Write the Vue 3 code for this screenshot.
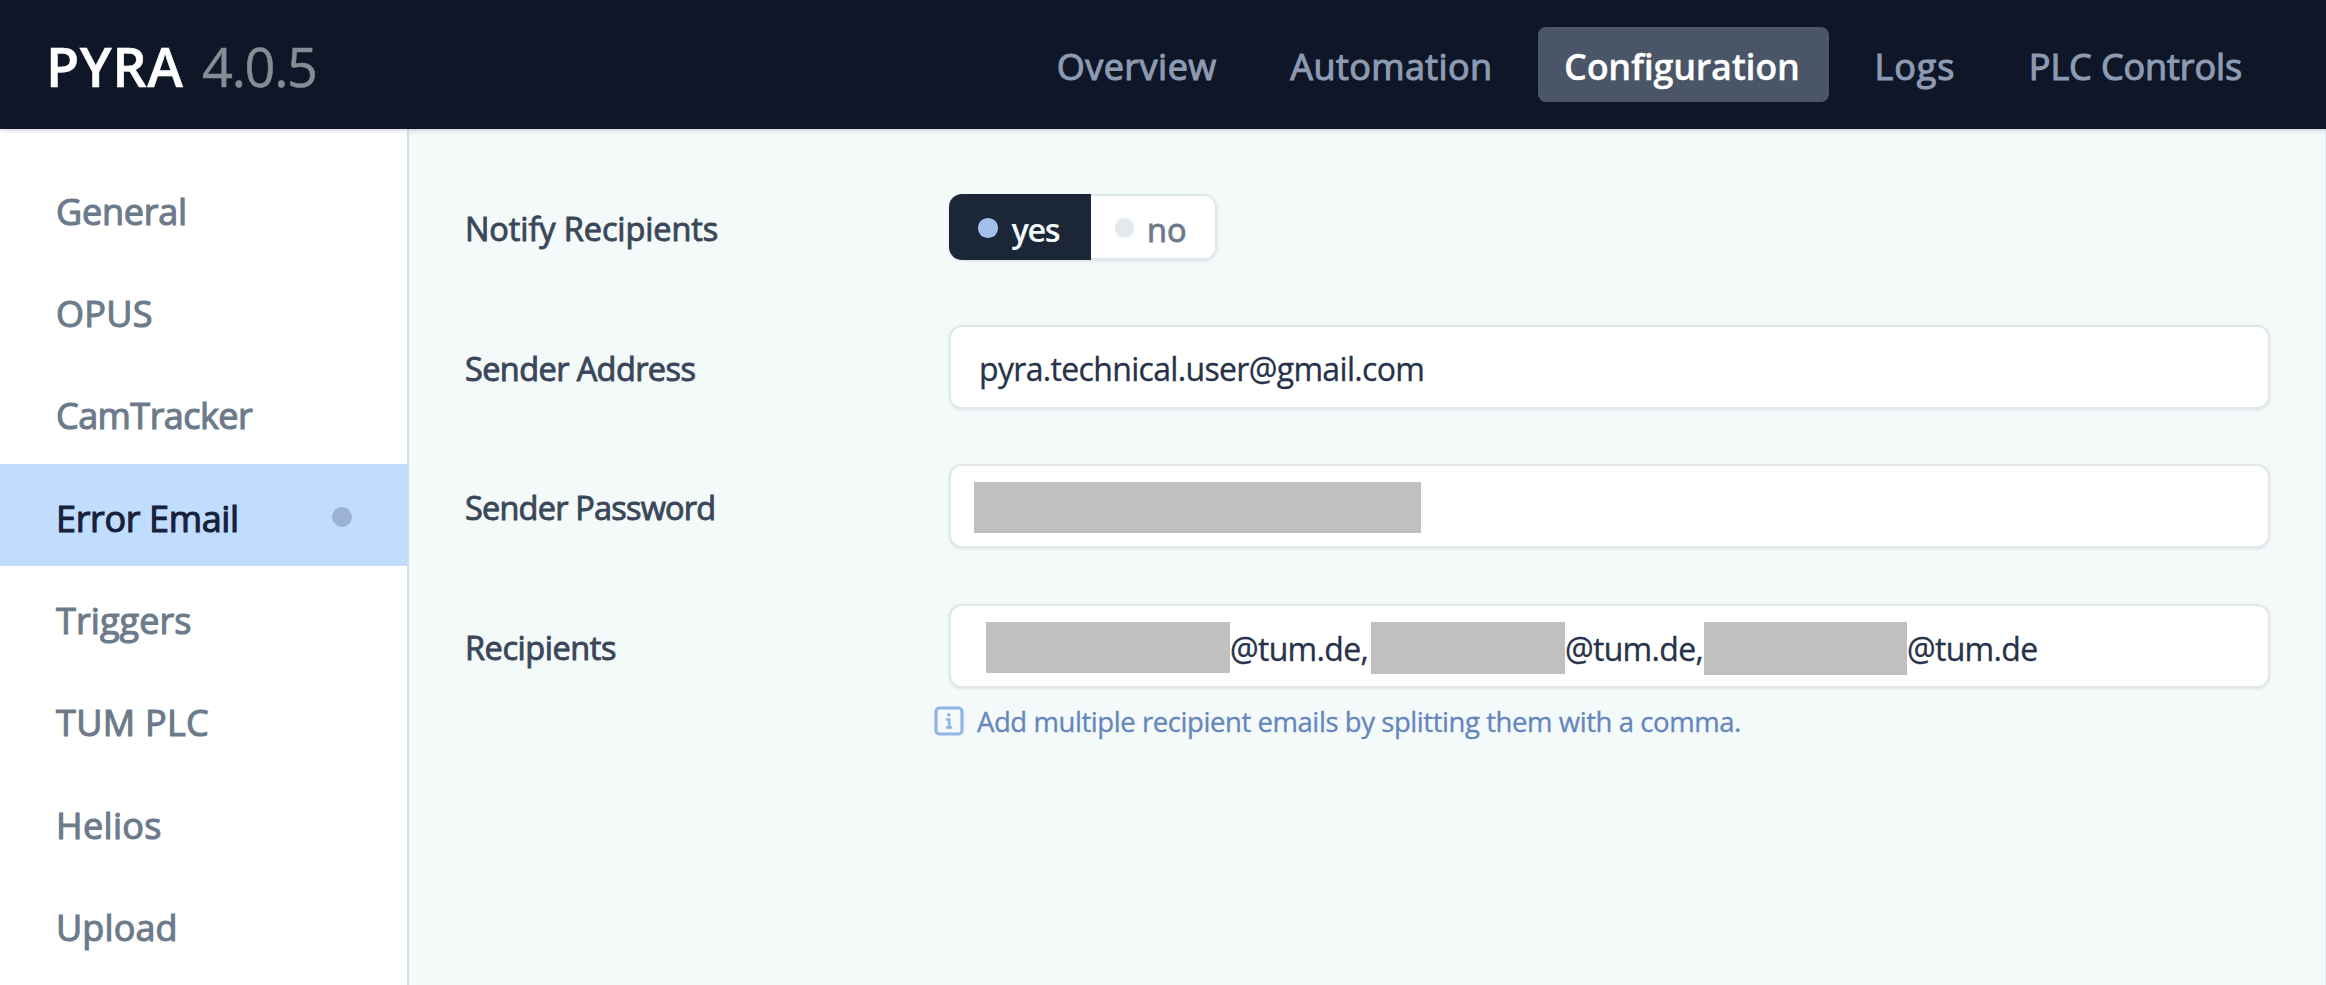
<script setup>
const navItems = [
  { label: 'Overview', tracking: 0.5 },
  { label: 'Automation', tracking: 0.4 },
  { label: 'Configuration', tracking: -0.27, active: true },
  { label: 'Logs', tracking: 0.9 },
  { label: 'PLC Controls', tracking: -0.1 },
]
const sections = [
  { label: 'General', tracking: -0.25 },
  { label: 'OPUS', tracking: 0.25 },
  { label: 'CamTracker', tracking: -0.55 },
  { label: 'Error Email', tracking: -0.35, active: true },
  { label: 'Triggers', tracking: 0.1 },
  { label: 'TUM PLC', tracking: 0.3 },
  { label: 'Helios', tracking: 0.35 },
  { label: 'Upload', tracking: 0.1 },
]
const track = (v) => ({ letterSpacing: v + 'px' })
</script>

<template>
  <div class="app">
    <header class="header">
      <div class="brand"><b>PYRA</b><span>4.0.5</span></div>
      <nav class="nav">
        <a v-for="n in navItems" :key="n.label" :class="['nav-item', { active: n.active }]">
          <span :style="track(n.tracking)">{{ n.label }}</span>
        </a>
      </nav>
    </header>
    <div class="body">
      <aside class="sidebar">
        <a v-for="s in sections" :key="s.label" :class="['side-item', { active: s.active }]">
          <span :style="track(s.tracking)">{{ s.label }}</span>
          <i v-if="s.active" class="side-dot"></i>
        </a>
      </aside>
      <main class="main">
        <div class="row toggle-row">
          <label class="label">Notify Recipients</label>
          <div class="toggle">
            <button class="opt yes"><i></i><span>yes</span></button>
            <button class="opt no"><i></i><span>no</span></button>
          </div>
        </div>
        <div class="row">
          <label class="label tight">Sender Address</label>
          <div class="field"><span class="value email">pyra.technical.user@gmail.com</span></div>
        </div>
        <div class="row">
          <label class="label tighter">Sender Password</label>
          <div class="field"><i class="mask m0"></i></div>
        </div>
        <div class="row">
          <label class="label snug">Recipients</label>
          <div class="field recipients">
            <i class="mask m1"></i><span class="value v1">@tum.de,</span>
            <i class="mask m2"></i><span class="value v2">@tum.de,</span>
            <i class="mask m3"></i><span class="value v3">@tum.de</span>
          </div>
        </div>
        <div class="hint">
          <svg width="30" height="30" viewBox="0 0 30 30" fill="none">
            <rect x="2" y="2" width="26" height="26" rx="3.5" stroke="#93b4e6" stroke-width="3.2" />
            <path d="M12 13.5h3.2v8M12 21.5h6.2" stroke="#8fb0e2" stroke-width="2.6" />
            <circle cx="14.8" cy="8.8" r="1.8" fill="#8fb0e2" />
          </svg>
          <span>Add multiple recipient emails by splitting them with a comma.</span>
        </div>
      </main>
    </div>
  </div>
</template>

<style>
body { margin: 0; overflow: hidden; }
</style>

<style scoped>
* { box-sizing: border-box; }
.app {
  width: 2326px; height: 985px; overflow: hidden;
  display: flex; flex-direction: column;
  font-family: "Open Sans", "Noto Sans", sans-serif; font-size: 36px;
  background: #f4f9fa; white-space: nowrap;
}
.header {
  height: 129px; flex: none; background: #0f1627;
  display: flex; align-items: center; justify-content: space-between;
  padding: 0 56px 0 46px; position: relative; z-index: 1;
  box-shadow: 0 1px 5px rgba(15, 30, 40, 0.22);
}
.brand { display: flex; font-size: 54px; line-height: 74px; padding-top: 2px; }
.brand b { font-weight: 600; color: #fff; letter-spacing: 0.5px; width: 156px; -webkit-text-stroke: 0.5px #fff; }
.brand span { color: #868b94; letter-spacing: -1.25px; -webkit-text-stroke: 0.5px currentColor; }
.nav { display: flex; align-items: center; gap: 17.5px; }
.nav-item {
  height: 75px; padding: 3px 28px 0; border-radius: 8px; color: #8c9ab2;
  display: flex; align-items: center; -webkit-text-stroke: 1.1px currentColor;
}
.nav-item.active {
  background: #4a5567; color: #fff; font-weight: 600;
  padding: 3px 26px 0; width: 291px; -webkit-text-stroke: 0.3px currentColor;
}
.body { flex: 1; display: flex; min-height: 0; }
.sidebar {
  width: 409px; flex: none; background: #fff; padding-top: 28px;
  border-right: 2px solid #d3dfe4; display: flex; flex-direction: column;
}
.side-item {
  height: 102.35px; flex: none; display: flex; align-items: center;
  justify-content: space-between; padding: 3px 55px 0 56px; color: #6c7a8a;
  -webkit-text-stroke: 1.1px currentColor;
}
.side-item span { padding-top: 3px; }
.side-item.active { background: #c0ddff; color: #17213a; }
.side-dot { width: 20px; height: 20px; border-radius: 50%; background: #9bb1d6; }
.main { flex: 1; padding: 65px 55px 0 56px; border-right: 1px solid #dce9f3; }
.row { display: flex; align-items: center; height: 83px; margin-bottom: 56.5px; }
.toggle-row { height: 66px; margin-bottom: 65px; }
.label {
  width: 484px; flex: none; font-size: 32.5px; color: #3a4759; padding-top: 2px;
  -webkit-text-stroke: 0.9px currentColor; margin-top: 1px; letter-spacing: -0.1px;
}
.label.tight { letter-spacing: -0.6px; }
.label.tighter { letter-spacing: -0.8px; }
.label.snug { letter-spacing: -0.45px; }
.toggle {
  display: flex; height: 66px; border-radius: 13px; overflow: hidden;
  box-shadow: 0 1px 3px rgba(30, 60, 70, 0.12);
}
.opt {
  border: 0; margin: 0; font: inherit; font-size: 32.5px; display: flex;
  align-items: center; padding: 0;
}
.opt i { width: 19.5px; height: 19.5px; border-radius: 50%; flex: none; margin-top: 2px; }
.opt span { padding-top: 5px; }
.yes { width: 141.5px; background: #1b2637; color: #f3f8fc; padding-left: 29px; font-weight: 600; }
.yes i { background: #a3c0ec; margin-right: 14px; }
.yes span { letter-spacing: -1.4px; }
.no {
  width: 126px; background: #fff; color: #6d7a8a; padding-left: 24px;
  border: 2px solid #dfe7ea; border-left: 0; border-radius: 0 13px 13px 0;
  -webkit-text-stroke: 0.9px currentColor;
}
.no i { background: #e3e9ec; margin-right: 13px; }
.field {
  flex: 1; height: 84px; background: #fff; border: 2px solid #dfe7e9; border-radius: 13px;
  display: flex; align-items: center; box-shadow: 0 1px 3px rgba(30, 60, 70, 0.1);
}
.value {
  font-size: 32px; color: #26324a; letter-spacing: -0.7px; padding-top: 4px; flex: none;
  -webkit-text-stroke: 0.3px currentColor;
}
.email { letter-spacing: -0.67px; margin-left: 28px; }
.mask { background: #c0c0c0; height: 51px; flex: none; }
.m0 { width: 447px; margin: 2px 0 0 23px; }
.recipients { align-items: flex-start; padding-top: 16px; }
.recipients .value { line-height: 51px; padding-top: 1px; }
.m1 { width: 244px; margin-left: 35px; }
.m2 { width: 194px; height: 52px; }
.m3 { width: 203px; height: 53px; }
.v1 { width: 141px; }
.v2 { width: 139px; }
.hint {
  display: flex; align-items: center; gap: 13px; margin: -43px 0 0 469px; height: 40px;
  font-size: 27.5px; letter-spacing: -0.43px; color: #6486bd;
  -webkit-text-stroke: 0.3px currentColor;
}
.hint span { padding-top: 2px; }
</style>
